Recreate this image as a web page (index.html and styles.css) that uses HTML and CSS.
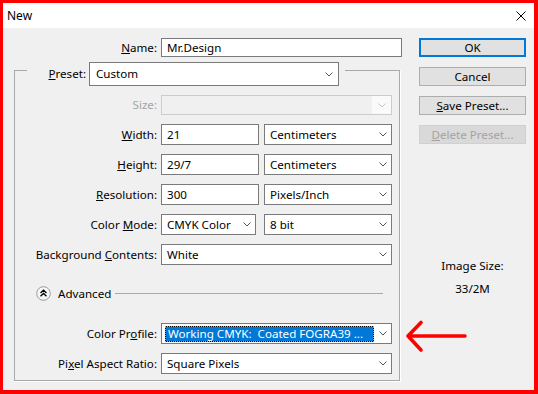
FILE: index.html
```html
<!DOCTYPE html>
<html>
<head>
<meta charset="utf-8">
<title>New</title>
<link rel="stylesheet" href="styles.css">
</head>
<body>
<div class="window">
  <div class="titlebar">
    <span class="title">New</span>
    <svg class="close" width="10" height="10" viewBox="0 0 10 10"><path d="M0.5 0.5 L9.5 9.5 M9.5 0.5 L0.5 9.5" stroke="#000" stroke-width="1" fill="none"/></svg>
  </div>
  <div class="content">
    <div class="main">
      <div class="name-row">
        <span class="lbl name-lbl"><u>N</u>ame:</span>
        <div class="field input name-input">Mr.Design</div>
      </div>
      <fieldset class="group">
        <legend class="preset">
          <span class="lbl preset-lbl"><u>P</u>reset:</span>
          <div class="field select preset-select"><span class="val">Custom</span><svg class="chev" width="8" height="5" viewBox="0 0 8 5"><path d="M0.5 0.5 L4 4 L7.5 0.5" stroke="#555" fill="none"/></svg></div>
        </legend>
        <div class="rows">
          <span class="lbl disabled">Size:</span>
          <div class="field select disabled-select size-select"><span class="val"></span><span class="arrow-box"><svg class="chev" width="8" height="5" viewBox="0 0 8 5"><path d="M0.5 0.5 L4 4 L7.5 0.5" stroke="#c4c4c4" fill="none"/></svg></span></div>

          <span class="lbl"><u>W</u>idth:</span>
          <div class="pair">
            <div class="field input num">21</div>
            <div class="field select unit"><span class="val">Centimeters</span><svg class="chev" width="8" height="5" viewBox="0 0 8 5"><path d="M0.5 0.5 L4 4 L7.5 0.5" stroke="#555" fill="none"/></svg></div>
          </div>

          <span class="lbl"><u>H</u>eight:</span>
          <div class="pair">
            <div class="field input num">29/7</div>
            <div class="field select unit"><span class="val">Centimeters</span><svg class="chev" width="8" height="5" viewBox="0 0 8 5"><path d="M0.5 0.5 L4 4 L7.5 0.5" stroke="#555" fill="none"/></svg></div>
          </div>

          <span class="lbl"><u>R</u>esolution:</span>
          <div class="pair">
            <div class="field input num">300</div>
            <div class="field select unit"><span class="val">Pixels/Inch</span><svg class="chev" width="8" height="5" viewBox="0 0 8 5"><path d="M0.5 0.5 L4 4 L7.5 0.5" stroke="#555" fill="none"/></svg></div>
          </div>

          <span class="lbl">Color <u>M</u>ode:</span>
          <div class="pair mode-pair">
            <div class="field select"><span class="val">CMYK Color</span><svg class="chev" width="8" height="5" viewBox="0 0 8 5"><path d="M0.5 0.5 L4 4 L7.5 0.5" stroke="#555" fill="none"/></svg></div>
            <div class="field select"><span class="val">8 bit</span><svg class="chev" width="8" height="5" viewBox="0 0 8 5"><path d="M0.5 0.5 L4 4 L7.5 0.5" stroke="#555" fill="none"/></svg></div>
          </div>

          <span class="lbl">Background <u>C</u>ontents:</span>
          <div class="field select"><span class="val">White</span><svg class="chev" width="8" height="5" viewBox="0 0 8 5"><path d="M0.5 0.5 L4 4 L7.5 0.5" stroke="#555" fill="none"/></svg></div>
        </div>

        <div class="advanced">
          <svg class="adv-icon" width="15" height="15" viewBox="0 0 15 15"><circle cx="7.5" cy="7.5" r="6.8" fill="#f7f7f7" stroke="#9a9a9a" stroke-width="1"/><path d="M4.5 7 L7.5 4.2 L10.5 7 M4.5 10.2 L7.5 7.4 L10.5 10.2" stroke="#000" stroke-width="1.3" fill="none"/></svg>
          <span class="adv-text">Advanced</span>
          <span class="adv-line"></span>
        </div>

        <div class="rows rows2">
          <span class="lbl">Color Pr<u>o</u>file:</span>
          <div class="field select profile"><span class="hl">Working CMYK:&nbsp; Coated FOGRA39 ...</span><svg class="chev" width="8" height="5" viewBox="0 0 8 5"><path d="M0.5 0.5 L4 4 L7.5 0.5" stroke="#555" fill="none"/></svg></div>

          <span class="lbl">Pi<u>x</u>el Aspect Ratio:</span>
          <div class="field select"><span class="val">Square Pixels</span><svg class="chev" width="8" height="5" viewBox="0 0 8 5"><path d="M0.5 0.5 L4 4 L7.5 0.5" stroke="#555" fill="none"/></svg></div>
        </div>
      </fieldset>
    </div>

    <div class="side">
      <div class="btn default">OK</div>
      <div class="btn">Cancel</div>
      <div class="btn"><u>S</u>ave Preset...</div>
      <div class="btn btn-disabled"><u>D</u>elete Preset...</div>
      <div class="image-size">
        <div>Image Size:</div>
        <div>33/2M</div>
      </div>
    </div>
  </div>
  <svg class="annot" width="67" height="38" viewBox="0 0 67 38"><path d="M5 18 L62 18 M18 4.5 L5 18 L18 32" stroke="#ff0000" stroke-width="3.6" fill="none" stroke-linecap="round" stroke-linejoin="round"/></svg>
</div>
</body>
</html>
```

FILE: styles.css
```css
* {
  box-sizing: border-box;
}

body {
  margin: 0;
  font-family: "Noto Sans", "Open Sans", "DejaVu Sans", sans-serif;
  font-size: 11.6px;
  color: #000;
  background: #fff;
}

u {
  text-decoration: underline;
  text-underline-offset: 1px;
  text-decoration-thickness: 1px;
}

.window {
  position: relative;
  width: 538px;
  height: 394px;
  border-style: solid;
  border-color: #ff0000;
  border-width: 3px 4px 4px 3px;
  background: #f0f0f0;
  display: flex;
  flex-direction: column;
  overflow: hidden;
}

.titlebar {
  height: 25px;
  flex: none;
  background: #fff;
  display: flex;
  align-items: center;
  justify-content: space-between;
  padding: 0 8px 0 4px;
}

.title {
  font-size: 12px;
  line-height: 16px;
}

.close {
  display: block;
  margin-top: 1px;
}

.content {
  flex: 1;
  display: flex;
  align-items: flex-start;
  padding: 10px 8px 0 11px;
}

.main {
  width: 388px;
  flex: none;
}

.lbl {
  text-align: right;
  white-space: nowrap;
  line-height: 16px;
}

.lbl.disabled {
  color: #a3a3a3;
}

.name-row {
  display: flex;
  align-items: center;
}

.name-lbl {
  width: 143px;
  margin-right: 4px;
}

.field {
  height: 21px;
  border: 1px solid #7a7a7a;
  background: #fff;
  display: flex;
  align-items: center;
  padding-left: 5px;
  line-height: 16px;
  white-space: nowrap;
}

.name-input {
  width: 241px;
  height: 19px;
}

.select {
  justify-content: space-between;
  padding-right: 4px;
}

.chev {
  display: block;
  flex: none;
}

.group {
  margin: -3px 0 0 0;
  padding: 0;
  width: 386px;
  border: 1px solid #a9a9a9;
  box-shadow: 1px 1px 0 #fff;
  min-width: 0;
}

.preset {
  margin-left: 12px;
  padding: 8px 6px 0 18px;
  display: flex;
  align-items: center;
}

.preset-lbl {
  width: 41px;
  margin-right: 3px;
}

.preset-select {
  width: 250px;
  height: 24px;
  padding-left: 6px;
  padding-right: 5px;
}

.rows {
  display: grid;
  grid-template-columns: 142px 231px;
  column-gap: 4px;
  row-gap: 9px;
  align-items: center;
  padding-top: 9px;
}

.size-select {
  height: 20px;
}

.disabled-select {
  background: #f0f0f0;
  border-color: #cccccc;
  padding-right: 0;
}

.arrow-box {
  width: 19px;
  height: 100%;
  background: #fafafa;
  display: flex;
  align-items: center;
  justify-content: center;
}

.pair {
  display: flex;
  justify-content: space-between;
}

.pair .num {
  width: 98px;
}

.pair .unit {
  width: 128px;
}

.mode-pair .select:first-child {
  width: 95px;
}

.mode-pair .select:last-child {
  width: 128px;
}

.advanced {
  display: flex;
  align-items: center;
  height: 17px;
  margin-top: 20px;
  padding-left: 21px;
  padding-right: 16px;
}

.adv-icon {
  display: block;
  flex: none;
}

.adv-text {
  margin-left: 7px;
  line-height: 16px;
}

.adv-line {
  flex: 1;
  margin-left: 4px;
  border-top: 1px solid #a9a9a9;
  height: 0;
}

.rows2 {
  padding-top: 21px;
  padding-bottom: 6px;
}

.profile {
  padding-left: 3px;
}

.hl {
  display: block;
  flex: none;
  width: 209px;
  height: 16px;
  line-height: 14px;
  padding-left: 2px;
  color: #fff;
  overflow: hidden;
  white-space: nowrap;
  border: 1px dotted #f0a020;
  background: linear-gradient(#0078d7, #0078d7) padding-box, #000 border-box;
}

.side {
  width: 107px;
  flex: none;
  margin-left: 17px;
  display: flex;
  flex-direction: column;
  gap: 10px;
}

.btn {
  height: 19px;
  border: 1px solid #adadad;
  background: #e1e1e1;
  display: flex;
  align-items: center;
  justify-content: center;
  line-height: 16px;
  white-space: nowrap;
}

.btn.default {
  border: 2px solid #0078d7;
}

.btn.btn-disabled {
  background: #d9d9d9;
  border-color: #d0d0d0;
  color: #a3a3a3;
}

.image-size {
  margin-top: 104px;
  display: flex;
  flex-direction: column;
  align-items: center;
  gap: 7px;
  line-height: 16px;
}

.annot {
  position: absolute;
  left: 400px;
  top: 315px;
  display: block;
}
```
